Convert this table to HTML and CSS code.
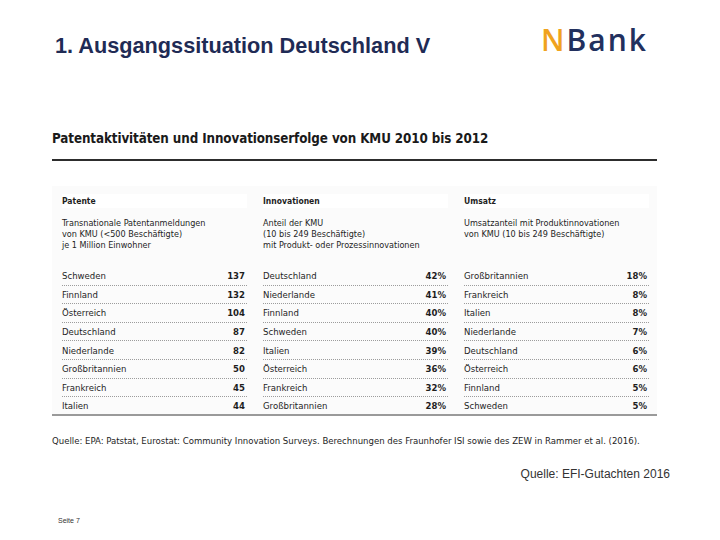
FILE: index.html
```html
<!DOCTYPE html>
<html lang="de">
<head>
<meta charset="utf-8">
<link rel="stylesheet" href="styles.css">
</head>
<body>
<div class="slide">
  <header class="head">
    <h1 class="title">1. Ausgangssituation Deutschland V</h1>
    <div class="logo"><span class="logo-n">N</span><span class="logo-bank">Bank</span></div>
  </header>

  <section class="figure">
    <h2 class="fig-title">Patentaktivitäten und Innovationserfolge von KMU 2010 bis 2012</h2>
    <div class="rule"></div>

    <div class="panel">
      <div class="group">
        <div class="g-head">Patente</div>
        <div class="g-desc">Transnationale Patentanmeldungen<br>von KMU (&lt;500 Beschäftigte)<br>je 1 Million Einwohner</div>
        <div class="rows">
          <div class="row"><span class="name">Schweden</span><span class="val">137</span></div>
          <div class="row"><span class="name">Finnland</span><span class="val">132</span></div>
          <div class="row"><span class="name">Österreich</span><span class="val">104</span></div>
          <div class="row"><span class="name">Deutschland</span><span class="val">87</span></div>
          <div class="row"><span class="name">Niederlande</span><span class="val">82</span></div>
          <div class="row"><span class="name">Großbritannien</span><span class="val">50</span></div>
          <div class="row"><span class="name">Frankreich</span><span class="val">45</span></div>
          <div class="row"><span class="name">Italien</span><span class="val">44</span></div>
        </div>
      </div>
      <div class="group">
        <div class="g-head">Innovationen</div>
        <div class="g-desc">Anteil der KMU<br>(10 bis 249 Beschäftigte)<br>mit Produkt- oder Prozessinnovationen</div>
        <div class="rows">
          <div class="row"><span class="name">Deutschland</span><span class="val">42%</span></div>
          <div class="row"><span class="name">Niederlande</span><span class="val">41%</span></div>
          <div class="row"><span class="name">Finnland</span><span class="val">40%</span></div>
          <div class="row"><span class="name">Schweden</span><span class="val">40%</span></div>
          <div class="row"><span class="name">Italien</span><span class="val">39%</span></div>
          <div class="row"><span class="name">Österreich</span><span class="val">36%</span></div>
          <div class="row"><span class="name">Frankreich</span><span class="val">32%</span></div>
          <div class="row"><span class="name">Großbritannien</span><span class="val">28%</span></div>
        </div>
      </div>
      <div class="group">
        <div class="g-head">Umsatz</div>
        <div class="g-desc">Umsatzanteil mit Produktinnovationen<br>von KMU (10 bis 249 Beschäftigte)</div>
        <div class="rows">
          <div class="row"><span class="name">Großbritannien</span><span class="val">18%</span></div>
          <div class="row"><span class="name">Frankreich</span><span class="val">8%</span></div>
          <div class="row"><span class="name">Italien</span><span class="val">8%</span></div>
          <div class="row"><span class="name">Niederlande</span><span class="val">7%</span></div>
          <div class="row"><span class="name">Deutschland</span><span class="val">6%</span></div>
          <div class="row"><span class="name">Österreich</span><span class="val">6%</span></div>
          <div class="row"><span class="name">Finnland</span><span class="val">5%</span></div>
          <div class="row"><span class="name">Schweden</span><span class="val">5%</span></div>
        </div>
      </div>
    </div>

    <p class="fig-source">Quelle: EPA: Patstat, Eurostat: Community Innovation Surveys. Berechnungen des Fraunhofer ISI sowie des ZEW in Rammer et al. (2016).</p>
  </section>

  <p class="quelle">Quelle: EFI-Gutachten 2016</p>
  <footer class="page">Seite 7</footer>
</div>
</body>
</html>
```

FILE: styles.css
```css
* { box-sizing: border-box; }
html, body { margin: 0; padding: 0; background: #fff; }
.slide {
  width: 720px;
  height: 540px;
  position: relative;
  font-family: "Liberation Sans", Arial, sans-serif;
  display: flex;
  flex-direction: column;
}
.head {
  display: flex;
  justify-content: space-between;
  align-items: flex-start;
  padding: 25px 72px 0 55px;
  height: 130px;
}
.title {
  margin: 8px 0 0 0;
  font-size: 21.7px;
  font-weight: bold;
  color: #1f2b55;
}
.logo {
  font-family: "Open Sans", "Lato", sans-serif;
  font-size: 30px;
  font-weight: 600;
  letter-spacing: 2px;
  line-height: 30px;
  margin-top: 0;
}
.logo-n { color: #f0a31e; }
.logo-bank { color: #22305e; }

.figure {
  margin: 0 63px 0 52px;
}
.fig-title {
  margin: 0;
  font-family: "DejaVu Sans Condensed", "DejaVu Sans", sans-serif;
  font-weight: bold;
  font-size: 13.3px;
  line-height: 18px;
  color: #1a1a1a;
  letter-spacing: -0.1px;
}
.rule {
  height: 2px;
  background: #2d2d2d;
  margin-top: 11px;
}
.panel {
  margin-top: 25px;
  background: #fbfbfb;
  display: grid;
  grid-template-columns: 1fr 1fr 1fr;
  gap: 16px;
  padding: 8px 8px 0 10px;
  border-bottom: 2px solid #9a9a9a;
  font-family: "DejaVu Sans Condensed", "DejaVu Sans", sans-serif;
  color: #1e1e1e;
}
.group { display: flex; flex-direction: column; }
.g-head {
  font-weight: bold;
  font-size: 8.5px;
  line-height: 12px;
  background: #fff;
  padding: 1px 0;
}
.g-desc {
  font-size: 9px;
  line-height: 11.2px;
  height: 49px;
  margin-top: 10px;
}
.rows { display: flex; flex-direction: column; }
.row {
  display: flex;
  justify-content: space-between;
  align-items: center;
  height: 18.6px;
  font-size: 9.5px;
  border-bottom: 1px dotted #9c9c9c;
}
.row:last-child { border-bottom: none; height: 17px; }
.val { padding-right: 2px; font-weight: bold; }
.fig-source {
  margin: 19px 0 0 0;
  font-family: "DejaVu Sans Condensed", "DejaVu Sans", sans-serif;
  font-size: 9.5px;
  color: #1e1e1e;
}
.quelle {
  margin: 21px 50px 0 0;
  align-self: flex-end;
  font-size: 12px;
  color: #333;
}
.page {
  margin: 36px 0 0 58px;
  font-size: 7px;
  color: #333;
}
```
